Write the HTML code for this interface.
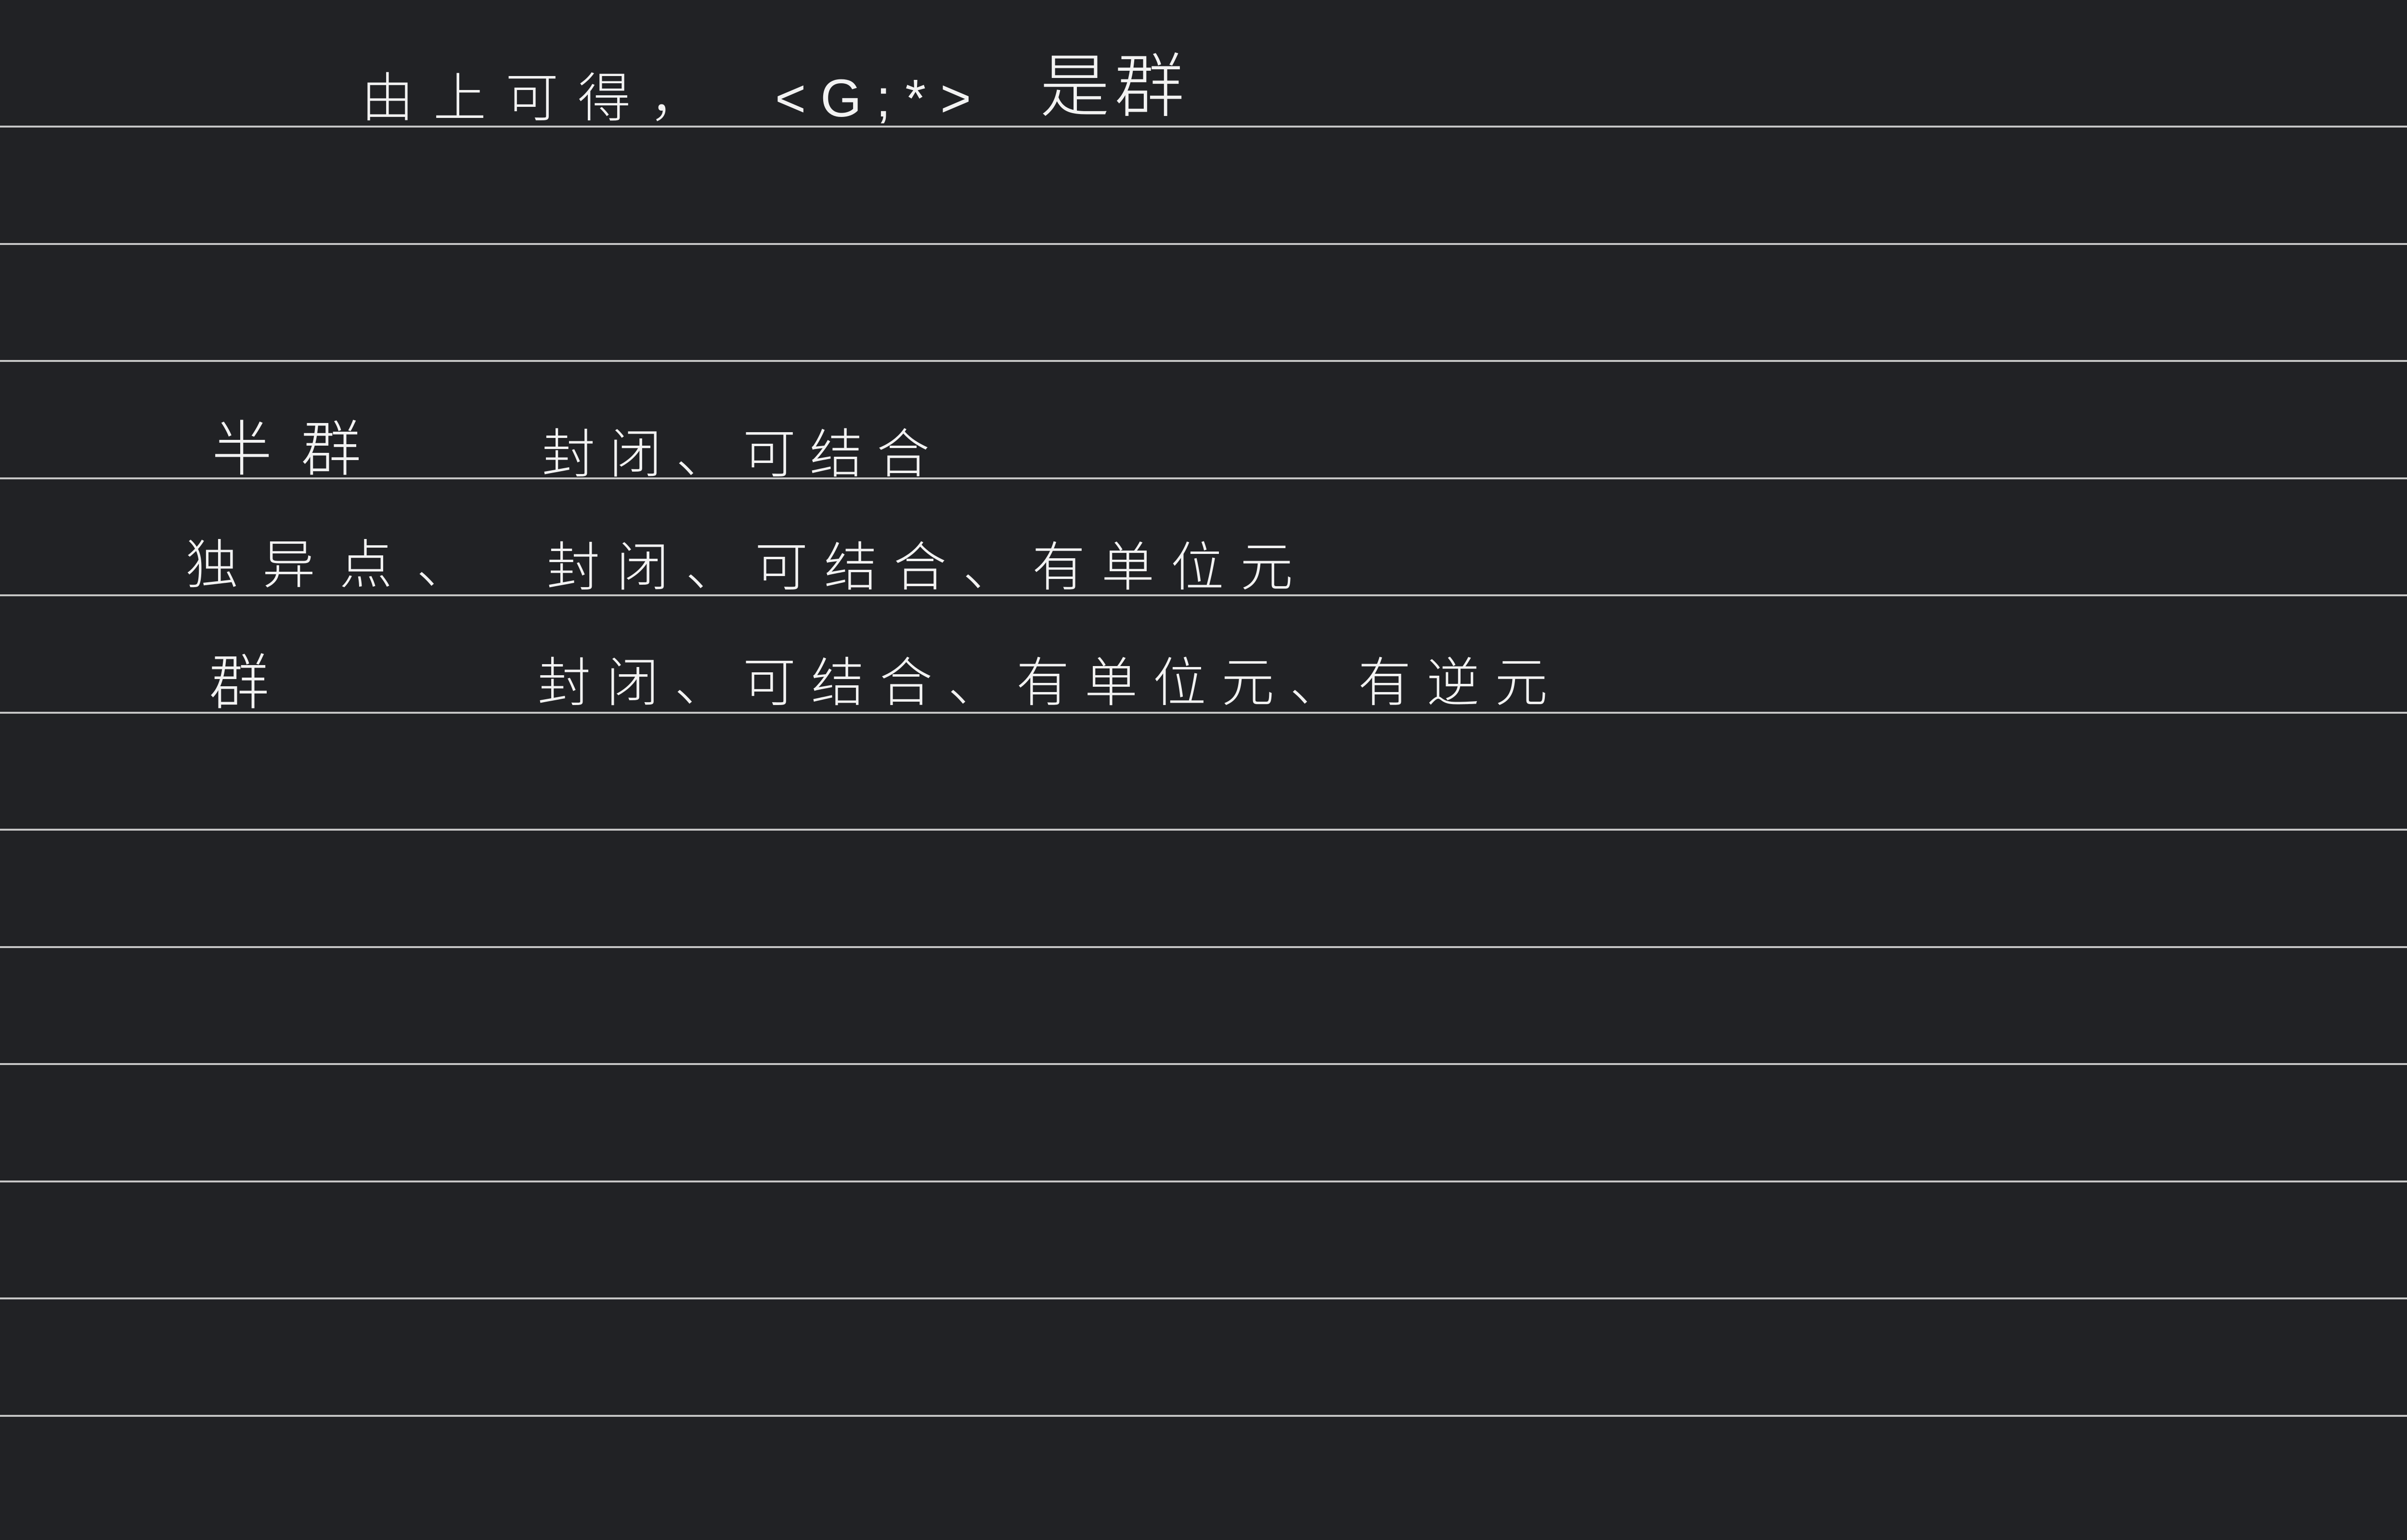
<!DOCTYPE html>
<html><head><meta charset="utf-8"><style>
html,body{margin:0;padding:0}
body{width:5120px;height:3200px;background:#212225;position:relative;overflow:hidden;font-family:"Liberation Sans","Noto Sans CJK SC",sans-serif;color:#f2f2f2}
.l{position:absolute;left:0;width:5120px;height:4px;background:#c6c6c6}
.t{position:absolute;font-size:110px;line-height:130px;white-space:nowrap;font-weight:300}
</style></head><body>
<div class="l" style="top:261px"></div>
<div class="l" style="top:505px"></div>
<div class="l" style="top:748px"></div>
<div class="l" style="top:992px"></div>
<div class="l" style="top:1235px"></div>
<div class="l" style="top:1479px"></div>
<div class="l" style="top:1722px"></div>
<div class="l" style="top:1966px"></div>
<div class="l" style="top:2209px"></div>
<div class="l" style="top:2453px"></div>
<div class="l" style="top:2696px"></div>
<div class="l" style="top:2940px"></div>

<div class="t" style="left:750px;top:140px;letter-spacing:40px">由上可得，</div>
<div class="t" style="left:1610px;top:140px;letter-spacing:30px">&lt;G;*&gt;</div>
<div class="t" style="left:2160px;top:115px;font-size:145px;letter-spacing:10px">是群</div>

<div class="t" style="left:440px;top:870px;font-size:125px;letter-spacing:60px">半群</div>
<div class="t" style="left:1126px;top:880px;letter-spacing:29px">封闭、可结合</div>

<div class="t" style="left:385px;top:1110px;letter-spacing:50px">独异点、</div>
<div class="t" style="left:1136px;top:1115px;letter-spacing:34px">封闭、可结合、有单位元</div>

<div class="t" style="left:434px;top:1355px;font-size:125px">群</div>
<div class="t" style="left:1117px;top:1355px;letter-spacing:32px">封闭、可结合、有单位元、有逆元</div>
</body></html>
